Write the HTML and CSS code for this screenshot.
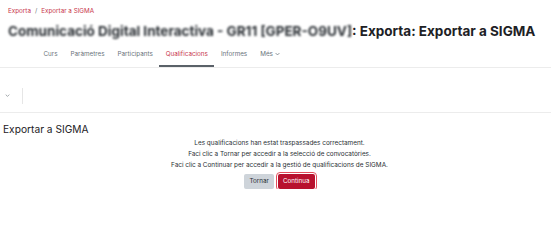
FILE: index.html
```html
<!DOCTYPE html>
<html lang="ca">
<head>
<meta charset="utf-8">
<title>Exportar a SIGMA</title>
<link rel="stylesheet" href="styles.css">
</head>
<body>
<header class="page-header">
  <nav class="breadcrumb">
    <a class="crumb" href="#">Exporta</a><span class="sep">/</span><a class="crumb" href="#">Exportar a SIGMA</a>
  </nav>
  <h1 class="title"><span class="blurred">Comunicació Digital Interactiva - GR11 [GPER-O9UV]</span>: Exporta: Exportar a SIGMA</h1>
</header>
<nav class="secondary-nav">
  <a class="nav-item" href="#">Curs</a>
  <a class="nav-item" href="#">Paràmetres</a>
  <a class="nav-item" href="#">Participants</a>
  <a class="nav-item active" href="#">Qualificacions</a>
  <a class="nav-item" href="#">Informes</a>
  <a class="nav-item more" href="#">Més<svg class="caret" viewBox="0 0 8 5" width="5" height="4"><path d="M1 1l3 3 3-3" fill="none" stroke="currentColor" stroke-width="1.2"/></svg></a>
</nav>
<div class="tertiary">
  <button class="select-toggle" aria-label="Selecció"><svg viewBox="0 0 8 5" width="5" height="3"><path d="M1 1l3 3 3-3" fill="none" stroke="currentColor" stroke-width="1.3"/></svg></button>
  <span class="divider"></span>
</div>
<main class="content">
  <h2 class="section-title">Exportar a SIGMA</h2>
  <div class="notice">
    <p>Les qualificacions han estat traspassades correctament.</p>
    <p>Faci clic a Tornar per accedir a la selecció de convocatòries.</p>
    <p>Faci clic a Continuar per accedir a la gestió de qualificacions de SIGMA.</p>
    <div class="buttons">
      <button class="btn btn-secondary">Tornar</button>
      <button class="btn btn-primary">Continua</button>
    </div>
  </div>
</main>
</body>
</html>
```
FILE: styles.css
```css
* { box-sizing: border-box; }
html, body { margin: 0; padding: 0; background: #fff; }
body {
  font-family: "Inter", "Roboto", "Liberation Sans", sans-serif;
  color: #1d2125;
  font-size: 6.3px;
  width: 551px;
  overflow: hidden;
}
a { text-decoration: none; }

.page-header { padding: 6.5px 8px 0; }
.breadcrumb { line-height: 9px; display: flex; align-items: center; }
.crumb { color: #c8374c; }
.sep { color: #6a737b; margin: 0 4px; }
.title {
  margin: 8.5px 0 0;
  font-size: 13.5px;
  line-height: 15px;
  font-weight: 700;
  white-space: nowrap;
  color: #1d2125;
}
.blurred { filter: blur(1.1px); color: #2a2f34; }

.secondary-nav {
  display: flex;
  padding-left: 37px;
  margin-top: 3px;
  border-bottom: 1px solid #ececec;
}
.nav-item {
  display: flex;
  align-items: center;
  gap: 2px;
  color: #6a737b;
  line-height: 10px;
  padding: 7px 6.5px 6px;
  border-bottom: 2px solid transparent;
}
.nav-item.active { color: #c8374c; border-bottom-color: #5a6168; }
.caret { color: #6a737b; }

.tertiary {
  display: flex;
  align-items: center;
  height: 45px;
  padding: 20px 0 9px 4px;
  border-bottom: 1px solid #ececec;
}
.select-toggle {
  border: 0;
  background: none;
  padding: 0;
  width: 6px;
  height: 16px;
  display: flex;
  align-items: center;
  justify-content: center;
  color: #8a9096;
}
.divider {
  width: 1px;
  height: 16px;
  background: #e6e6e6;
  margin-left: 12px;
}

.content { padding: 0 0 0 3px; }
.section-title {
  margin: 10px 0 0;
  font-size: 10.2px;
  line-height: 12px;
  font-weight: 400;
  color: #1d2125;
}
.notice {
  margin: 2.5px 0 0 5px;
  text-align: center;
  color: #2a2f34;
  font-size: 6.4px;
}
.notice p { margin: 0; line-height: 11px; }
.buttons {
  display: flex;
  justify-content: center;
  gap: 4px;
  margin-top: 3.5px;
}
.btn {
  font-family: inherit;
  font-size: 6.3px;
  height: 15px;
  border: 0;
  border-radius: 2px;
  padding: 0 5px;
  line-height: 15px;
}
.btn-secondary { background: #ced4da; color: #2a2f34; }
.btn-primary {
  background: #b8112e;
  color: #fff;
  outline: 1.5px solid #e2505e;
  outline-offset: 1px;
}
```
